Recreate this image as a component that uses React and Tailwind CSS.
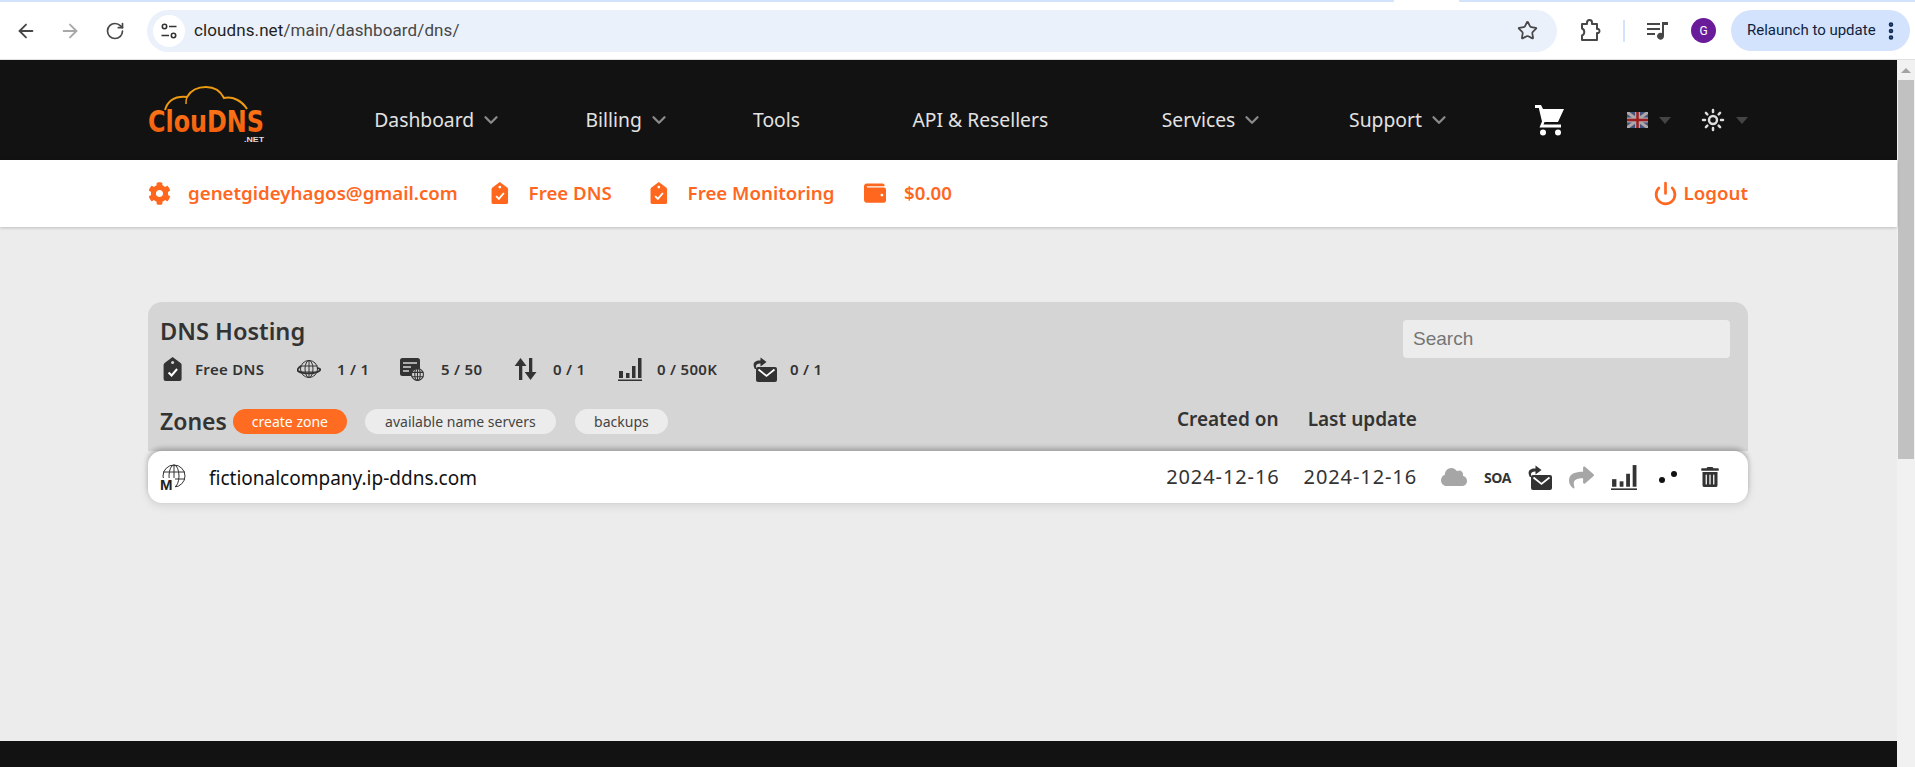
import React from 'react';
import { ArrowLeft, ArrowRight, RotateCw, Star, ChevronDown, Sun, Power, EllipsisVertical } from 'lucide-react';
import { FaCog, FaWallet, FaCloud, FaShare, FaTrashAlt } from 'react-icons/fa';

const dark = '#333333';

const Logo = () => (
  <svg width="118" height="60" viewBox="0 0 118 60" className="shrink-0 overflow-visible">
    <defs>
      <linearGradient id="logoText" x1="0" y1="0" x2="0" y2="1">
        <stop offset="0" stopColor="#ff7a1a" />
        <stop offset="1" stopColor="#f05a0a" />
      </linearGradient>
    </defs>
    <path d="M17 25 C20 15 28 11 39 12 C43 5 50 2 58 2 C67 2 73 7 76 13 C85 11 94 16 99 24" fill="none" stroke="#eb9a12" strokeWidth="2" />
    <path d="M39 12 C38 14 38 16 38 19" fill="none" stroke="#eb9a12" strokeWidth="1.5" />
    <text x="0" y="47" fontFamily="'DejaVu Sans', sans-serif" fontSize="31" fontWeight="700" fill="url(#logoText)" textLength="116" lengthAdjust="spacingAndGlyphs">ClouDNS</text>
    <text x="96" y="57" fontFamily="'Liberation Sans', sans-serif" fontSize="7" fontWeight="700" fill="#dddddd" textLength="20" lengthAdjust="spacingAndGlyphs">.NET</text>
  </svg>
);

const Cart = () => (
  <svg width="31" height="32" viewBox="0 0 31 32" fill="#ffffff">
    <path d="M1 1 H7 L9 5 H30 L24 18 H10.5 L9.5 20.5 H27 V23.5 H5.5 L8 17.5 L4.8 4 H1 Z" />
    <circle cx="9" cy="28.5" r="3" />
    <circle cx="24" cy="28.5" r="3" />
  </svg>
);

const Flag = () => (
  <svg width="21" height="16" viewBox="0 0 21 16" className="opacity-70">
    <rect width="21" height="16" fill="#5a6ea8" />
    <path d="M0 0 L21 16 M21 0 L0 16" stroke="#f0e6e6" strokeWidth="3" />
    <path d="M10.5 0 V16 M0 8 H21" stroke="#f0e6e6" strokeWidth="5" />
    <path d="M10.5 0 V16 M0 8 H21" stroke="#d8232a" strokeWidth="2.5" />
  </svg>
);

const Caret = () => (
  <div className="w-0 h-0 border-x-[6px] border-x-transparent border-t-[7px] border-t-[#444444]" />
);

const Tag = ({ color, bg, size = 22 }) => (
  <svg width={size * 0.8} height={size} viewBox="0 0 18 24">
    <path d="M9 0 L13 3 L17 6 Q18 7 18 8 V22 Q18 24 16 24 H2 Q0 24 0 22 V8 Q0 7 1 6 L5 3 Z" fill={color} />
    <circle cx="9" cy="5.5" r="1.5" fill={bg} />
    <path d="M5 15.5 L8 18.5 L13.5 12" fill="none" stroke={bg === '#d5d5d5' ? '#ffffff' : bg} strokeWidth="2" />
  </svg>
);

const PlanetGlobe = () => (
  <svg width="24" height="20" viewBox="0 0 24 20" fill="none" stroke={dark} strokeWidth="1">
    <circle cx="12" cy="10" r="8.5" />
    <ellipse cx="12" cy="10" rx="4" ry="8.5" />
    <path d="M3.5 7 H20.5 M3.5 13 H20.5 M12 1.5 V18.5" />
    <path d="M4 7 C1 9 0 11 1 12 C3 14 10 15 17 14 C21 13 24 11.5 23 10 C22.6 9.4 21 9 20 8.8" strokeWidth="1.8" />
  </svg>
);

const SmallGlobe = ({ size, x, y }) => (
  <g transform={`translate(${x} ${y}) scale(${size / 12})`} fill="#d5d5d5" stroke={dark} strokeWidth="1">
    <circle cx="6" cy="6" r="5.5" />
    <ellipse cx="6" cy="6" rx="2.5" ry="5.5" fill="none" />
    <path d="M0.5 4 H11.5 M0.5 8 H11.5 M6 0.5 V11.5" fill="none" />
  </g>
);

const ServerGlobe = () => (
  <svg width="24" height="24" viewBox="0 0 24 24">
    <rect x="0" y="1" width="20" height="18" rx="2.5" fill={dark} />
    <path d="M3 6 H17 M3 10 H11 M3 14 H9" stroke="#d5d5d5" strokeWidth="1.6" />
    <SmallGlobe size={13} x={11} y={11} />
  </svg>
);

const UpDown = () => (
  <svg width="23" height="24" viewBox="0 0 23 24" fill={dark}>
    <path d="M6.5 1 L12.5 9 H8.3 V23 H5 V9 H0.7 Z" />
    <path d="M16.5 23 L10.7 15 H15 V1 H18.3 V15 H22.5 Z" />
  </svg>
);

const Bars = ({ w = 24 }) => (
  <svg width={w} height={w} viewBox="0 0 24 24" fill={dark}>
    <rect x="1" y="14" width="4" height="7" />
    <rect x="8" y="16" width="3.5" height="5" />
    <rect x="14" y="9" width="3.5" height="12" />
    <rect x="20" y="1" width="3.5" height="20" />
    <rect x="0" y="22.5" width="24" height="1.5" />
  </svg>
);

const MailForward = () => (
  <svg width="25" height="25" viewBox="0 0 25 25">
    <rect x="4" y="10" width="21" height="15" rx="2" fill={dark} />
    <path d="M6.5 12.5 L14.5 19 L22.5 12.5" fill="none" stroke="#ffffff" strokeWidth="1.7" />
    <path d="M2.8 12 C-0.5 6 3.5 3 8.5 3.6 V0.4 L14.5 5 L8.5 9.6 V6.4 C5 6.2 2.8 8 4.6 12 Z" fill={dark} />
  </svg>
);

const ZoneGlobe = () => (
  <svg width="26" height="27" viewBox="0 0 26 27" fill="none" stroke={dark} strokeWidth="1" className="overflow-visible">
    <circle cx="14" cy="12" r="11" />
    <ellipse cx="14" cy="12" rx="5" ry="11" />
    <path d="M3 8 H25 M3 15 H25 M14 1 V23" />
    <rect x="0" y="14" width="15" height="13" fill="#ffffff" stroke="none" />
    <text x="0" y="26" fontFamily="'Liberation Sans', sans-serif" fontSize="15" fontWeight="700" fill="#222222" stroke="none">M</text>
  </svg>
);

const Dots = () => (
  <svg width="20" height="14" viewBox="0 0 20 14" fill="#111111">
    <circle cx="4" cy="10" r="3" />
    <circle cx="16" cy="4" r="3" />
  </svg>
);

const Puzzle = () => (
  <svg width="24" height="24" viewBox="0 0 24 24" fill="none" stroke="#474747" strokeWidth="2" strokeLinejoin="round">
    <path d="M4 5 H9 V3.5 A2.5 2.5 0 0 1 14 3.5 V5 H19 V10 H20.5 A2.5 2.5 0 0 1 20.5 14 H19 V21 H4 V16.5 C7 15.5 7 10.5 4 9.5 Z" />
  </svg>
);

const MediaQueue = () => (
  <svg width="22" height="20" viewBox="0 0 22 20" fill="#474747">
    <path d="M0 2 H13 V4 H0 Z M0 7 H13 V9 H0 Z M0 12 H8 V14 H0 Z" />
    <path d="M15 1 H21 V4 H17 V15 A3.5 3.5 0 1 1 15 12 Z" />
  </svg>
);

const Tune = () => (
  <svg width="18" height="18" viewBox="0 0 18 18" fill="none" stroke="#333333" strokeWidth="1.6">
    <circle cx="4.5" cy="4.5" r="2.2" />
    <path d="M9 4.5 H16.5 M1.5 13.5 H9" />
    <circle cx="13.5" cy="13.5" r="2.2" />
  </svg>
);

const NavItem = ({ label, width, caret }) => (
  <div className={`flex items-center gap-[6px] text-[19.3px] text-[#e2e2e2] ${width}`}>
    <span>{label}</span>
    {caret && <ChevronDown size={22} strokeWidth={2.5} className="text-[#8a8a8a]" />}
  </div>
);

const SubItem = ({ icon, label, gap = 'gap-5', width }) => (
  <div className={`flex items-center ${gap} ${width}`}>
    {icon}
    <span>{label}</span>
  </div>
);

const Stat = ({ icon, label, width, iconWidth }) => (
  <div className={`flex items-center ${width}`}>
    <div className={iconWidth}>{icon}</div>
    <span className="text-[15px] font-semibold text-[#333333] tracking-[0.3px]">{label}</span>
  </div>
);

const Pill = ({ children, className }) => (
  <div className={`h-[25px] rounded-full flex items-center justify-center text-[14px] ${className}`}>{children}</div>
);

export default function App() {
  return (
    <div className="h-screen w-full overflow-hidden flex flex-col bg-white font-['Noto_Sans',sans-serif]">
      {/* browser chrome */}
      <div className="h-[60px] shrink-0 flex flex-col border-b border-[#e0e0e0] font-['Roboto',sans-serif]">
        <div className="h-[2px] flex">
          <div className="w-[1394px] bg-[#d3e3fd]" />
          <div className="w-[65px]" />
          <div className="flex-1 bg-[#d3e3fd]" />
        </div>
        <div className="flex-1 flex items-center pl-[15px]">
          <ArrowLeft size={22} className="shrink-0 text-[#474747]" />
          <ArrowRight size={22} className="shrink-0 text-[#a8a8a8] ml-[22px]" />
          <RotateCw size={20} className="shrink-0 text-[#474747] ml-[24px]" />
          <div className="shrink-0 ml-[22px] w-[1410px] h-[42px] rounded-full bg-[#ebf1fa] flex items-center pl-[6px] pr-[19px]">
            <div className="w-[32px] h-[32px] rounded-full bg-white flex items-center justify-center"><Tune /></div>
            <span className="ml-[9px] text-[17px] tracking-[0.1px] text-[#1f1f1f]">cloudns.net<span className="text-[#474747]">/main/dashboard/dns/</span></span>
            <Star size={21} strokeWidth={2} className="ml-auto text-[#474747]" />
          </div>
          <div className="shrink-0 ml-[21px]"><Puzzle /></div>
          <div className="shrink-0 ml-[21px] w-[2px] h-[22px] bg-[#d3e3fd]" />
          <div className="shrink-0 ml-[22px]"><MediaQueue /></div>
          <div className="shrink-0 ml-[22px] w-[25px] h-[25px] rounded-full bg-[#6a1b9a] text-white text-[12px] flex items-center justify-center">G</div>
          <div className="shrink-0 ml-[15px] w-[179px] h-[41px] rounded-full bg-[#d3e3fd] flex items-center pl-[16px] text-[15px] text-[#0f1f3d]">
            <span>Relaunch to update</span>
            <EllipsisVertical size={22} strokeWidth={3} className="ml-[4px] text-[#0f2a55]" />
          </div>
        </div>
      </div>

      <div className="flex-1 flex min-h-0">
        <div className="flex-1 flex flex-col min-w-0 bg-[#ececec]">
          {/* top nav */}
          <div className="h-[100px] shrink-0 bg-[#121212]">
            <div className="w-[1600px] ml-[148px] h-full pt-[20px] flex items-center">
              <div className="w-[227px] mb-[10px]"><Logo /></div>
              <NavItem label="Dashboard" width="w-[212px]" caret />
              <NavItem label="Billing" width="w-[168px]" caret />
              <NavItem label="Tools" width="w-[160px]" />
              <NavItem label="API & Resellers" width="w-[250px]" />
              <NavItem label="Services" width="w-[188px]" caret />
              <NavItem label="Support" width="w-[185px]" caret />
              <div className="w-[94px]"><Cart /></div>
              <div className="w-[74px] flex items-center gap-[11px]"><Flag /><Caret /></div>
              <div className="flex items-center gap-[11px]">
                <Sun size={24} strokeWidth={2.5} className="text-[#dddddd]" />
                <Caret />
              </div>
            </div>
          </div>

          {/* account bar */}
          <div className="h-[67px] shrink-0 bg-white shadow-[0_1px_3px_rgba(0,0,0,0.2)] relative">
            <div className="w-[1600px] ml-[148px] h-full flex items-center text-[18.7px] font-semibold text-[#ff671f]">
              <SubItem icon={<FaCog size={23} />} label="genetgideyhagos@gmail.com" gap="gap-[17px]" width="w-[343px]" />
              <SubItem icon={<Tag color="#ff671f" bg="#ffffff" />} label="Free DNS" gap="gap-[20px]" width="w-[159px]" />
              <SubItem icon={<Tag color="#ff671f" bg="#ffffff" />} label="Free Monitoring" gap="gap-[20px]" width="w-[214px]" />
              <SubItem icon={<FaWallet size={22} />} label="$0.00" gap="gap-[18px]" />
              <div className="ml-auto flex items-center gap-[6px]">
                <Power size={25} strokeWidth={2.6} />
                <span>Logout</span>
              </div>
            </div>
          </div>

          {/* content */}
          <div className="flex-1 min-h-0 pt-[75px]">
            <div className="w-[1600px] ml-[148px]">
              <div className="bg-[#d5d5d5] rounded-t-[14px] h-[149px] px-3 pt-[13px] flex flex-col">
                <div className="flex justify-between">
                  <div>
                    <h1 className="text-[23.6px] leading-[32px] font-semibold text-[#333333]">DNS Hosting</h1>
                    <div className="flex items-center mt-[8px] h-[28px] pl-[3px]">
                      <Stat icon={<Tag color={dark} bg="#d5d5d5" size={24} />} label="Free DNS" width="w-[134px]" iconWidth="w-[32px]" />
                      <Stat icon={<PlanetGlobe />} label="1 / 1" width="w-[103px]" iconWidth="w-[40px]" />
                      <Stat icon={<ServerGlobe />} label="5 / 50" width="w-[114px]" iconWidth="w-[41px]" />
                      <Stat icon={<UpDown />} label="0 / 1" width="w-[104px]" iconWidth="w-[39px]" />
                      <Stat icon={<Bars />} label="0 / 500K" width="w-[134px]" iconWidth="w-[39px]" />
                      <Stat icon={<MailForward />} label="0 / 1" iconWidth="w-[38px]" />
                    </div>
                  </div>
                  <input
                    readOnly
                    placeholder="Search"
                    className="w-[327px] h-[38px] mt-[5px] mr-[6px] rounded bg-[#ececec] px-[10px] text-[19px] font-['Liberation_Sans',sans-serif] placeholder:text-[#757575] outline-none"
                  />
                </div>
                <div className="flex items-center mt-[26px] h-[25px]">
                  <span className="text-[23px] font-semibold text-[#333333]">Zones</span>
                  <Pill className="ml-[6px] w-[114px] bg-[#ff6b20] text-white">create zone</Pill>
                  <Pill className="ml-[18px] w-[191px] bg-[#ececec] text-[#444444]">available name servers</Pill>
                  <Pill className="ml-[19px] w-[93px] bg-[#ececec] text-[#444444]">backups</Pill>
                  <div className="ml-auto mb-[4px] flex items-center text-[19px] font-semibold text-[#333333] mr-[319px] gap-[29px]">
                    <span>Created on</span>
                    <span>Last update</span>
                  </div>
                </div>
              </div>
              <div className="h-[52px] bg-white rounded-[14px] shadow-[0_-3px_5px_rgba(0,0,0,0.22),0_3px_10px_rgba(0,0,0,0.1)] flex items-center pl-3 relative">
                <ZoneGlobe />
                <span className="ml-[23px] mt-[2px] text-[19px] text-[#111111]">fictionalcompany.ip-ddns.com</span>
                <div className="ml-auto flex items-center text-[20px] text-[#333333] gap-[24px] tracking-[0.9px]">
                  <span>2024-12-16</span>
                  <span>2024-12-16</span>
                </div>
                <div className="flex items-center w-[307px] ml-[24px] gap-[17px]">
                  <FaCloud size={26} className="text-[#a6a6a6]" />
                  <span className="text-[14px] font-bold text-[#333333] w-[26px] font-['Open_Sans',sans-serif] tracking-[-0.5px]">SOA</span>
                  <MailForward />
                  <FaShare size={25} className="text-[#a6a6a6]" />
                  <Bars w={26} />
                  <div className="ml-[4px]"><Dots /></div>
                  <FaTrashAlt size={20} className="text-[#333333] ml-[5px]" />
                </div>
              </div>
            </div>
          </div>

          {/* footer */}
          <div className="h-[26px] shrink-0 bg-[#121212]" />
        </div>

        {/* page scrollbar */}
        <div className="w-[18px] shrink-0 bg-[#f1f1f1] flex flex-col">
          <div className="h-[20px] flex items-center justify-center">
            <div className="w-0 h-0 border-x-[5px] border-x-transparent border-b-[5px] border-b-[#a3a3a3]" />
          </div>
          <div className="h-[379px] mx-[1px] bg-[#c1c1c1]" />
        </div>
      </div>
    </div>
  );
}
